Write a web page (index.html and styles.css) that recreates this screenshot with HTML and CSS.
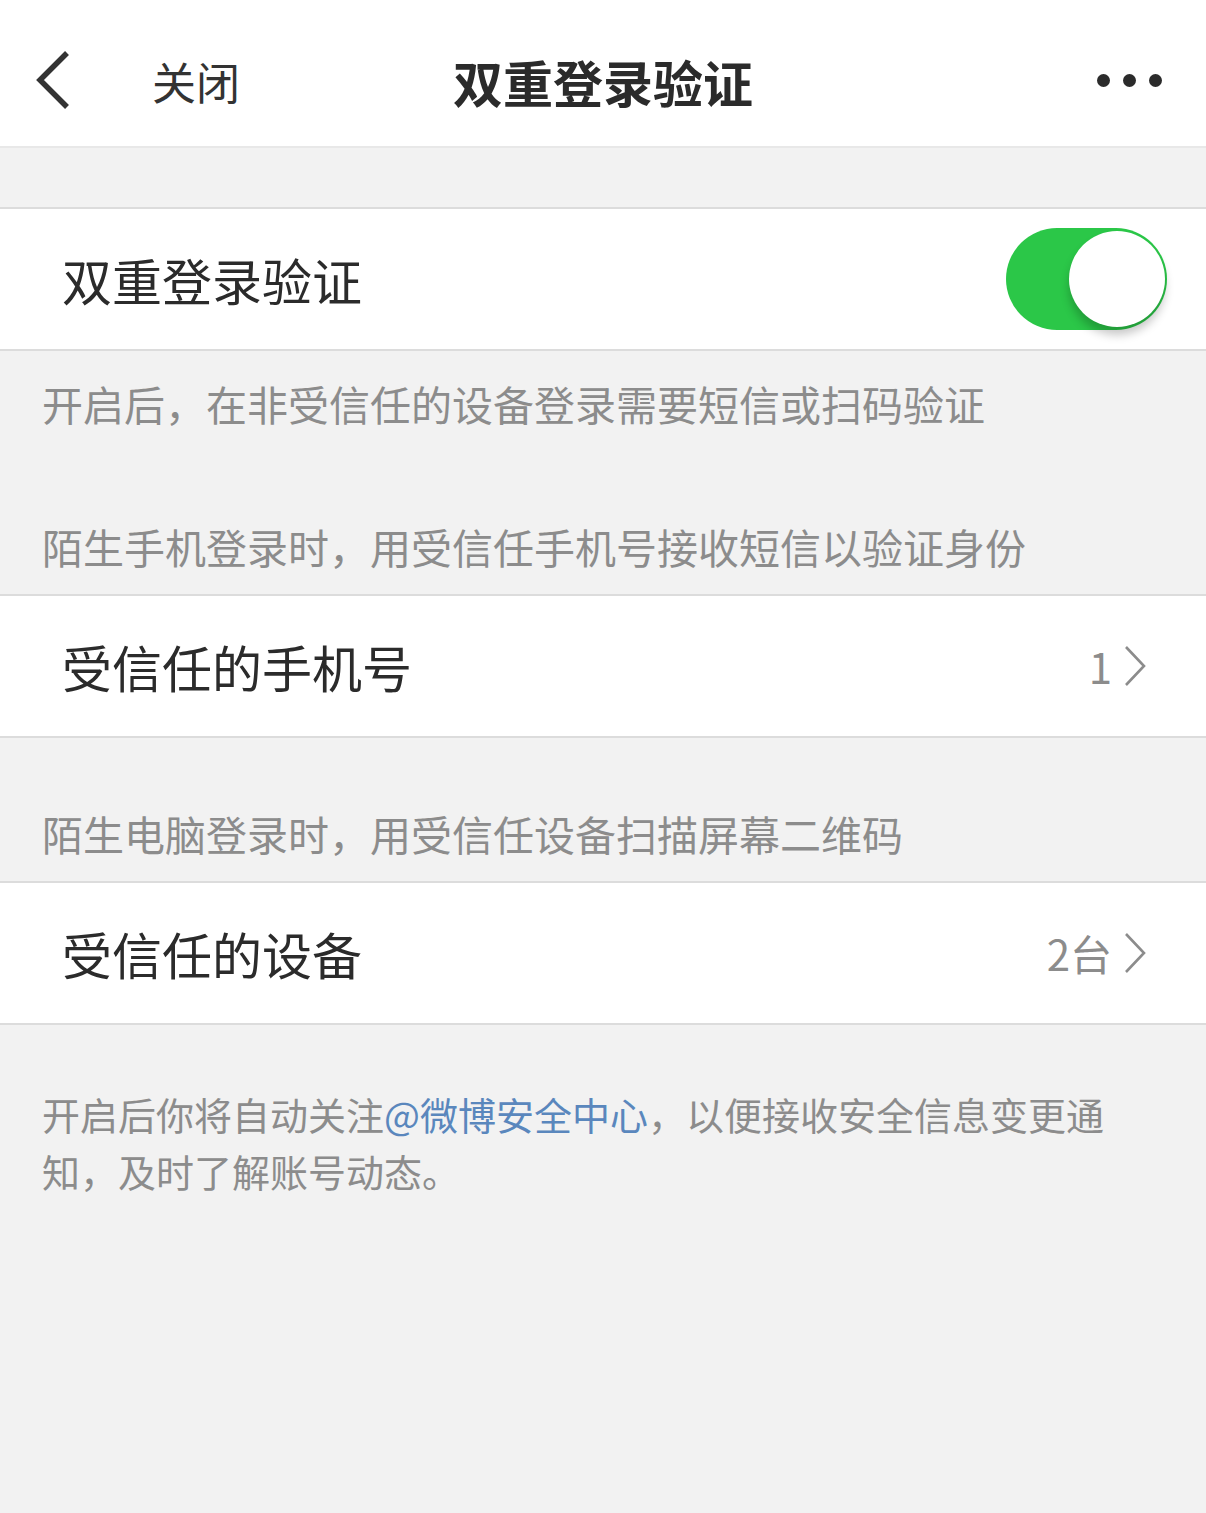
FILE: index.html
```html
<!DOCTYPE html>
<html lang="zh-CN">
<head>
    <meta charset="UTF-8">
    <meta name="viewport" content="width=device-width, initial-scale=1.0">
    <title>双重登录验证</title>
    <link rel="stylesheet" href="styles.css">
</head>
<body>

    <div class="topbar">
        <div class="topbar-left">
            <svg class="back" width="36" height="60" viewBox="0 0 36 60">
                <path d="M32 3 L5 30 L32 57" fill="none" stroke="#333" stroke-width="5.5"/>
            </svg>
            <span class="close">关闭</span>
        </div>
        <h1 class="title">双重登录验证</h1>
        <div class="topbar-right">
            <span class="dot"></span><span class="dot"></span><span class="dot"></span>
        </div>
    </div>

    <div class="spacer"></div>

    <div class="row">
        <span class="label">双重登录验证</span>
        <div class="switch on"><span class="knob"></span></div>
    </div>

    <p class="note first">开启后，在非受信任的设备登录需要短信或扫码验证</p>
    <p class="note">陌生手机登录时，用受信任手机号接收短信以验证身份</p>

    <div class="row">
        <span class="label">受信任的手机号</span>
        <span class="value">1<svg class="arrow" width="22" height="40" viewBox="0 0 22 40"><path d="M2 1 L20 20 L2 39" fill="none" stroke="#8c8c8c" stroke-width="2.6"/></svg></span>
    </div>

    <p class="note">陌生电脑登录时，用受信任设备扫描屏幕二维码</p>

    <div class="row">
        <span class="label">受信任的设备</span>
        <span class="value">2台<svg class="arrow" width="22" height="40" viewBox="0 0 22 40"><path d="M2 1 L20 20 L2 39" fill="none" stroke="#8c8c8c" stroke-width="2.6"/></svg></span>
    </div>

    <p class="footer">开启后你将自动关注<a href="#">@微博安全中心</a>，以便接收安全信息变更通知，及时了解账号动态。</p>

</body>
</html>
```

FILE: styles.css
```css
body {
    margin: 0;
    background-color: #f2f2f2;
    font-family: "Noto Sans CJK SC", "Liberation Sans", sans-serif;
    color: #333;
    min-height: 1513px;
}
.topbar {
    box-sizing: border-box;
    display: grid;
    grid-template-columns: 1fr auto 1fr;
    align-items: center;
    height: 148px;
    padding-top: 16px;
    background-color: #fff;
    border-bottom: 2px solid #e8e8e8;
}
.topbar-left {
    display: flex;
    align-items: center;
    padding-left: 35px;
}
.back {
    display: block;
    margin-top: -2px;
}
.close {
    font-size: 44px;
    margin-left: 81px;
    color: #333;
    line-height: 1;
}
.title {
    margin: 0;
    font-size: 50px;
    font-weight: bold;
    color: #2b2b2b;
    line-height: 1;
}
.topbar-right {
    display: flex;
    justify-content: flex-end;
    gap: 13px;
    padding-right: 44px;
    margin-top: -2px;
}
.dot {
    width: 13px;
    height: 13px;
    border-radius: 50%;
    background-color: #2b2b2b;
}
.spacer {
    height: 59px;
}
.row {
    display: flex;
    align-items: center;
    justify-content: space-between;
    height: 140px;
    padding: 0 40px 0 62px;
    background-color: #fff;
    border-top: 2px solid #dcdcdc;
    border-bottom: 2px solid #dcdcdc;
}
.label {
    font-size: 50px;
    color: #2b2b2b;
    line-height: 1;
}
.value {
    display: flex;
    align-items: center;
    font-size: 42px;
    color: #8c8c8c;
    line-height: 1;
    margin-right: 20px;
}
.arrow {
    margin-left: 12px;
}
.switch {
    position: relative;
    width: 161px;
    height: 102px;
    border-radius: 51px;
    background-color: #2bc748;
    margin-right: -1px;
}
.knob {
    position: absolute;
    top: 3px;
    right: 2px;
    width: 96px;
    height: 96px;
    border-radius: 50%;
    background-color: #fff;
    box-shadow: 0 8px 10px rgba(0, 0, 0, 0.22);
}
.note {
    margin: 0;
    padding: 67px 42px 19px;
    font-size: 41px;
    line-height: 57px;
    color: #8c8c8c;
}
.note.first {
    padding-top: 24px;
}
.footer {
    margin: 0;
    padding: 60px 80px 0 42px;
    font-size: 38px;
    line-height: 57px;
    color: #8c8c8c;
}
.footer a {
    color: #5a87bd;
    text-decoration: none;
}
```
